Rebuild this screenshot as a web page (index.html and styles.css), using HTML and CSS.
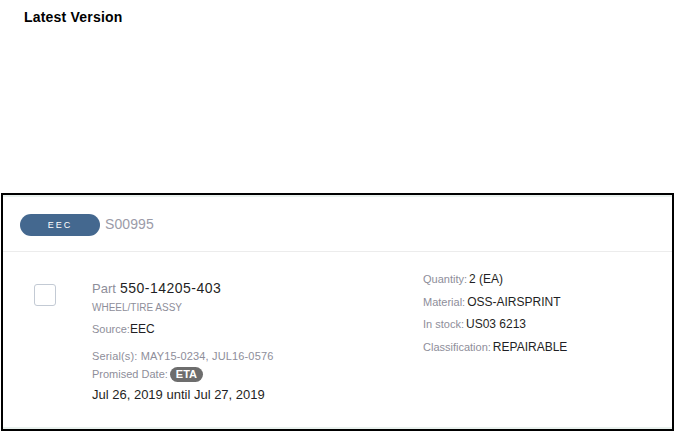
FILE: index.html
```html
<!DOCTYPE html>
<html>
<head>
<meta charset="utf-8">
<link rel="stylesheet" href="styles.css">
</head>
<body>
<h1 class="title">Latest Version</h1>
<div class="card">
  <div class="card-inner">
    <div class="card-header">
      <span class="pill">EEC</span>
      <span class="order">S00995</span>
    </div>
    <div class="card-body">
      <div class="check"></div>
      <div class="left-col">
        <div class="line part"><span class="lbl-lg">Part</span> <span class="part-no">550-14205-403</span></div>
        <div class="line desc">WHEEL/TIRE ASSY</div>
        <div class="line src"><span class="lbl">Source:</span><span class="val">EEC</span></div>
        <div class="line sm serial">Serial(s): MAY15-0234, JUL16-0576</div>
        <div class="line sm"><span class="lbl">Promised Date:</span><span class="eta">ETA</span></div>
        <div class="line date">Jul 26, 2019 until Jul 27, 2019</div>
      </div>
      <div class="right-col">
        <div class="row"><span class="lbl">Quantity:</span><span class="val">2 (EA)</span></div>
        <div class="row"><span class="lbl">Material:</span><span class="val">OSS-AIRSPRINT</span></div>
        <div class="row"><span class="lbl">In stock:</span><span class="val">US03 6213</span></div>
        <div class="row"><span class="lbl">Classification:</span><span class="val">REPAIRABLE</span></div>
      </div>
    </div>
  </div>
</div>
</body>
</html>
```
FILE: styles.css
```css
* { box-sizing: border-box; }
html, body { margin: 0; padding: 0; background: #fff; }
body { font-family: "Liberation Sans", Arial, sans-serif; color: #1f1f24; }

.title {
  margin: 0;
  padding: 9px 0 0 24px;
  height: 193px;
  font-size: 14px;
  line-height: 17px;
  font-weight: bold;
  color: #000;
  letter-spacing: 0.2px;
}

.card {
  margin-left: 1px;
  width: 673px;
  height: 238px;
  border: 2px solid #000;
  background: #e9f1ee;
  padding: 2px 0;
}
.card-inner {
  background: #fff;
  height: 100%;
}

.card-header {
  display: flex;
  gap: 5px;
  padding: 17px 0 0 17px;
  height: 55px;
  align-items: flex-start;
  border-bottom: 1px solid #ececec;
}
.pill {
  width: 80px;
  height: 22px;
  border-radius: 11px;
  background: #44688f;
  color: #fff;
  font-size: 9px;
  letter-spacing: 2px;
  line-height: 22px;
  text-align: center;
}
.order {
  font-size: 14px;
  line-height: 20px;
  color: #9b9ba8;
  letter-spacing: 0.1px;
}

.card-body {
  display: flex;
  padding-left: 31px;
}
.check {
  width: 22px;
  height: 22px;
  margin-top: 32px;
  border: 1px solid #c3cad4;
  border-radius: 3px;
  flex: none;
}
.left-col {
  margin-left: 36px;
  padding-top: 26px;
  width: 331px;
}
.line { height: 20px; line-height: 20px; font-size: 11px; white-space: nowrap; }
.line.sm { height: 18px; line-height: 18px; }
.lbl-lg { font-size: 13px; color: #8e8e9a; }
.part-no { margin-left: 1px; font-size: 14px; color: #1f1f24; letter-spacing: 0.5px; }
.desc { font-size: 10px; color: #8e8e9a; }
.src { margin-top: 1px; }
.lbl { font-size: 11px; color: #8e8e9a; }
.val { font-size: 12px; color: #1f1f24; }
.serial { margin-top: 8px; color: #8e8e9a; letter-spacing: 0.15px; }
.eta {
  display: inline-block;
  margin-left: 2px;
  padding: 0 6px;
  height: 15px;
  line-height: 15px;
  border-radius: 8px;
  background: #6d6d6d;
  color: #fff;
  font-weight: bold;
  font-size: 11px;
  vertical-align: middle;
  position: relative;
  top: -1px;
}
.date { margin-top: 3px; height: 18px; line-height: 18px; font-size: 13px; color: #1f1f24; }

.right-col {
  padding-top: 16px;
}
.row { height: 22.6px; line-height: 22px; font-size: 11px; white-space: nowrap; }
.row .val { margin-left: 2px; }
```
